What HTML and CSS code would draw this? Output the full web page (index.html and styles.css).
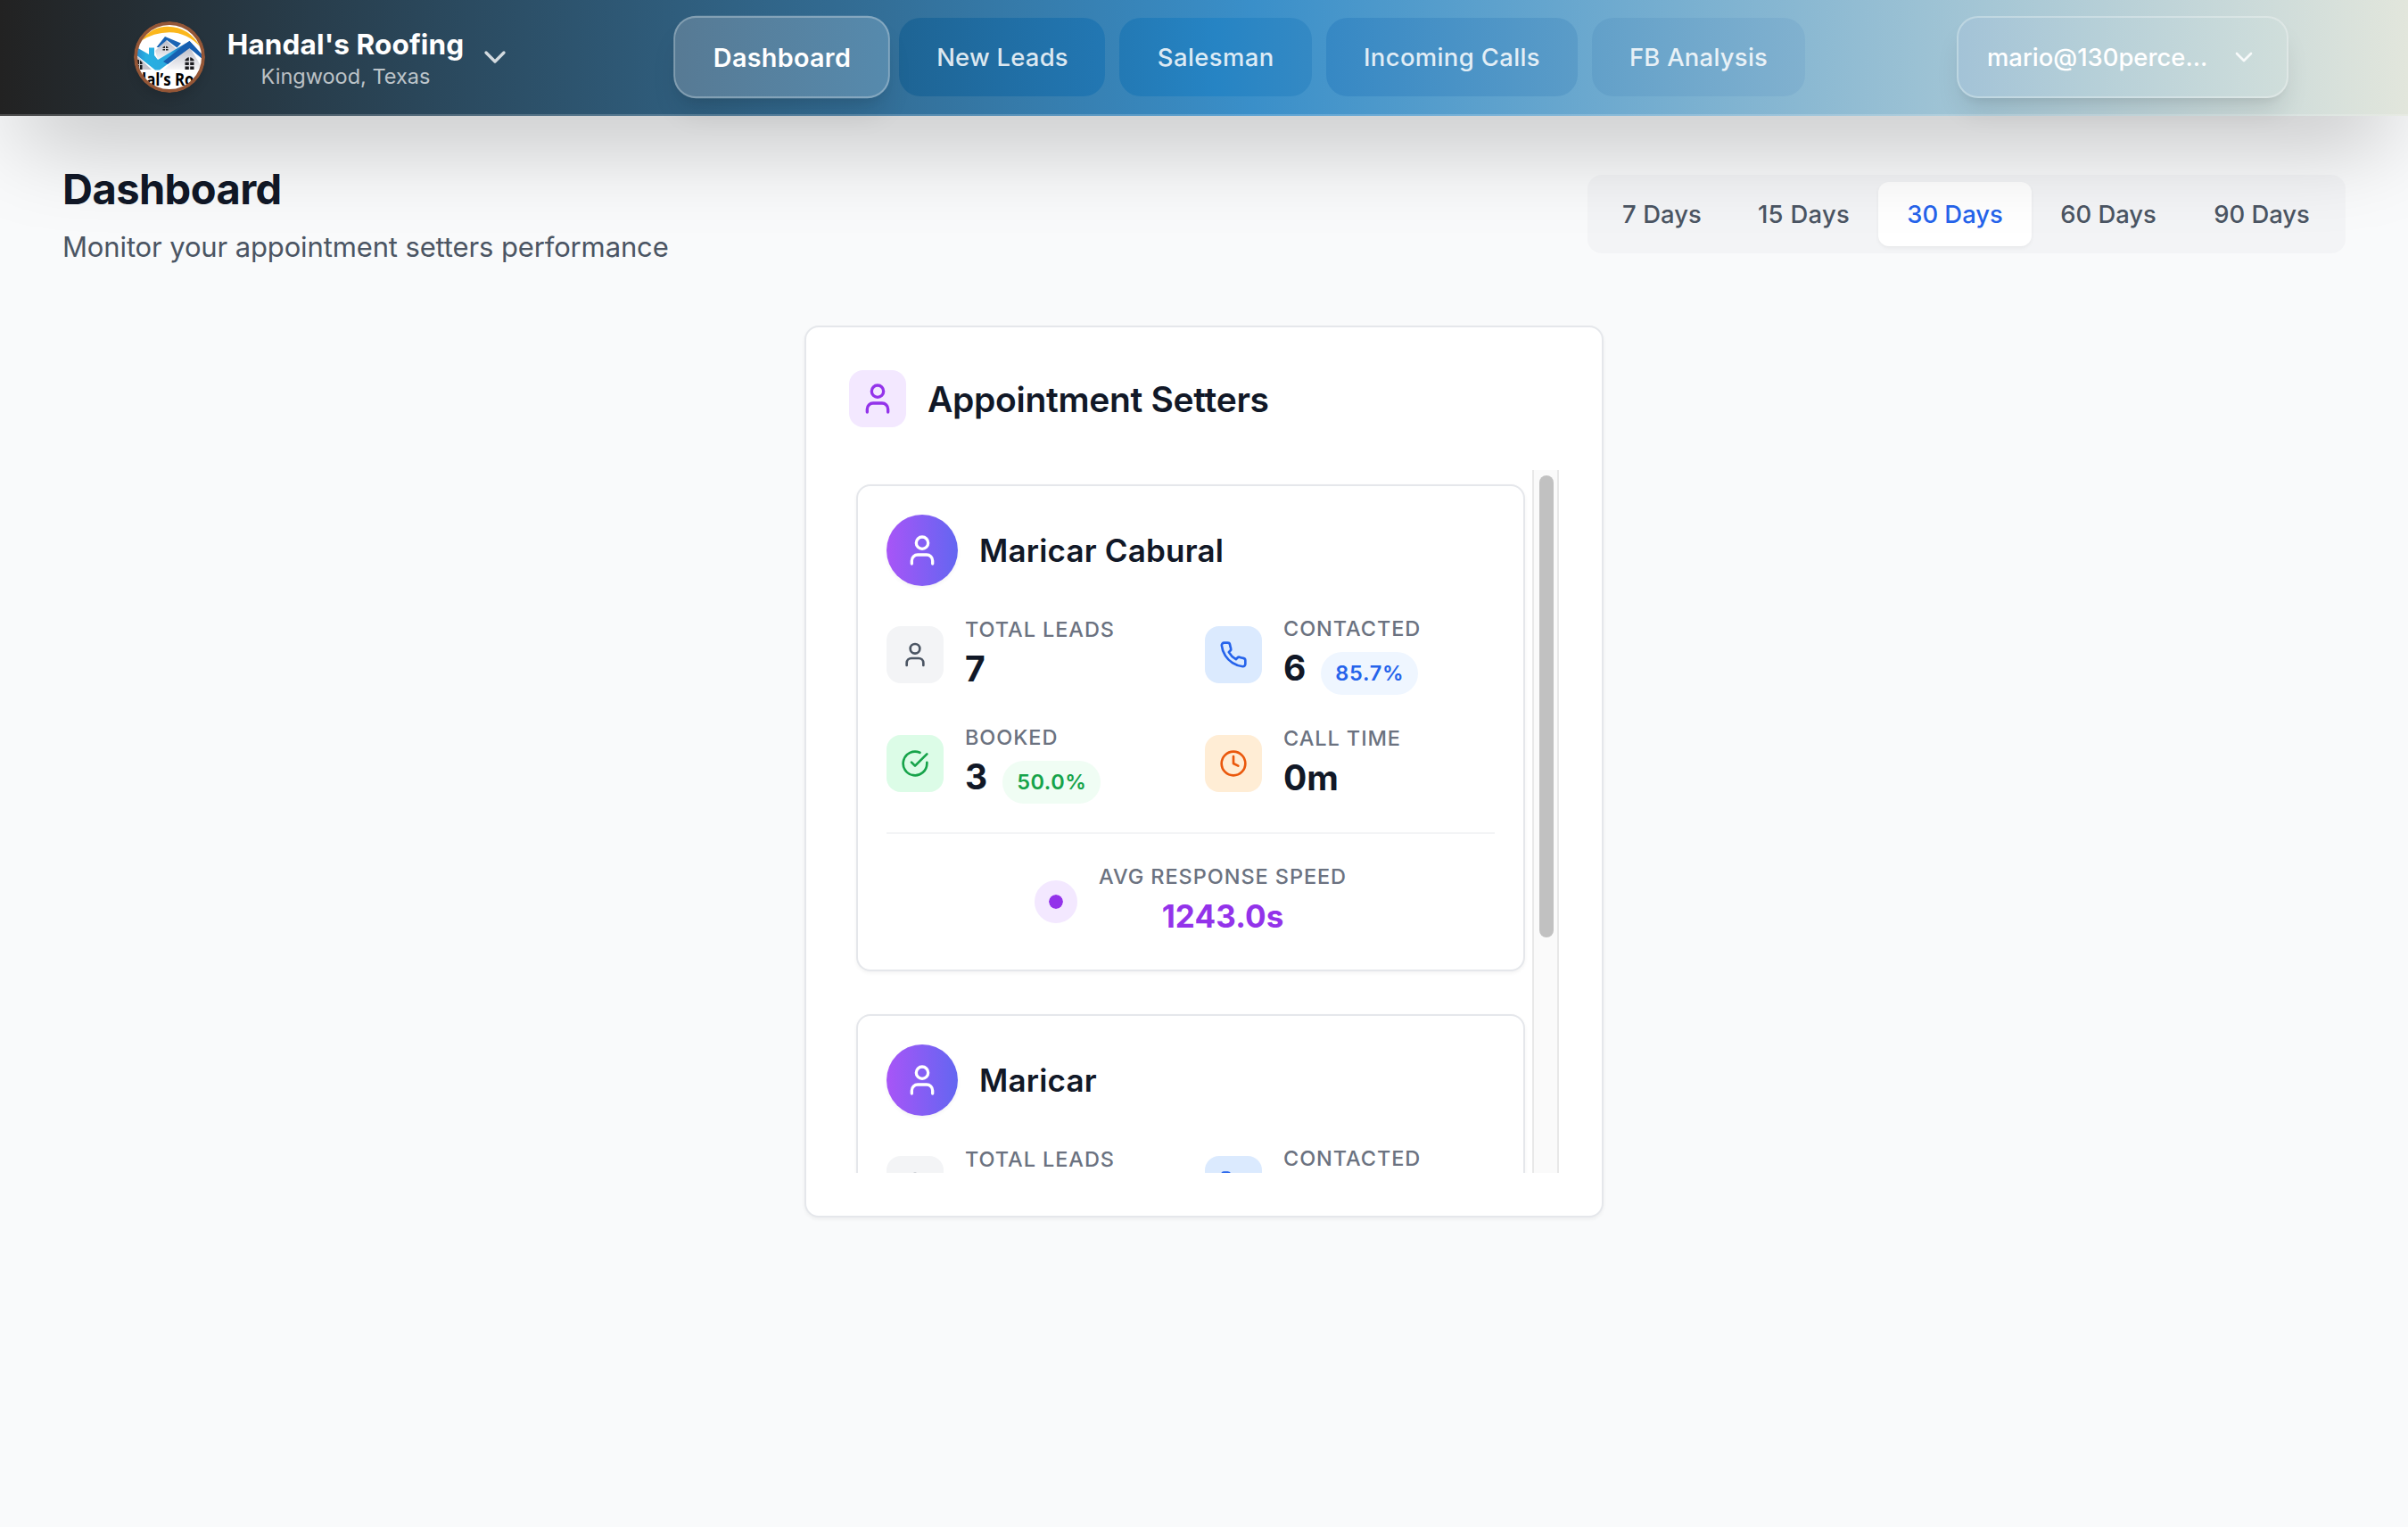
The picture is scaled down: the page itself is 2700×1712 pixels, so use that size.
FILE: index.html
```html
<!DOCTYPE html>
<html lang="en">
<head>
<meta charset="utf-8">
<title>Dashboard</title>
<link rel="stylesheet" href="styles.css">
</head>
<body>
<svg class="sprite" aria-hidden="true">
  <symbol id="user" viewBox="0 0 24 24"><path d="M19 21v-2a4 4 0 0 0-4-4H9a4 4 0 0 0-4 4v2"/><circle cx="12" cy="7" r="4"/></symbol>
  <symbol id="phone" viewBox="0 0 24 24"><path d="M22 16.92v3a2 2 0 0 1-2.18 2 19.79 19.79 0 0 1-8.63-3.07 19.5 19.5 0 0 1-6-6 19.79 19.79 0 0 1-3.07-8.67A2 2 0 0 1 4.11 2h3a2 2 0 0 1 2 1.72 12.84 12.84 0 0 0 .7 2.81 2 2 0 0 1-.45 2.11L8.09 9.91a16 16 0 0 0 6 6l1.27-1.27a2 2 0 0 1 2.11-.45 12.84 12.84 0 0 0 2.81.7A2 2 0 0 1 22 16.92z"/></symbol>
  <symbol id="check" viewBox="0 0 24 24"><path d="M22 11.08V12a10 10 0 1 1-5.93-9.14"/><path d="m9 11 3 3L22 4"/></symbol>
  <symbol id="clock" viewBox="0 0 24 24"><circle cx="12" cy="12" r="10"/><path d="M12 6v6l4 2"/></symbol>
  <symbol id="chevron" viewBox="0 0 24 24"><path d="m6 9 6 6 6-6"/></symbol>
</svg>

<header class="topbar">
  <div class="brand">
    <svg class="logo" viewBox="0 0 80 80">
      <defs>
        <clipPath id="disc"><circle cx="40" cy="40" r="36.5"/></clipPath>
        <linearGradient id="swoosh" x1="0" y1="0" x2="1" y2="0"><stop offset="0" stop-color="#2a86cc"/><stop offset=".15" stop-color="#27b0e2"/><stop offset=".5" stop-color="#2ba8de"/><stop offset=".72" stop-color="#1762b3"/><stop offset="1" stop-color="#1a5fae"/></linearGradient>
        <linearGradient id="wall" x1="0" y1="0" x2="0" y2="1"><stop offset="0" stop-color="#b9bac6"/><stop offset="1" stop-color="#f6f6f8"/></linearGradient>
      </defs>
      <circle cx="40" cy="40" r="38" fill="#fff"/>
      <g clip-path="url(#disc)">
        <path d="M8 22Q20 5.700 38 5.700Q62 6 75 29Q60 12.500 40 12.300Q22 12.500 8 22Z" fill="#fbb71c"/>
        <path d="M3 38l17 16H3z" fill="#c4c5cd"/>
        <path d="M36 21l12 10-21 12-3-10z" fill="url(#wall)"/>
        <path d="M25.500 29L35 17l18 7.500-4.500 5L37 21l-9 8z" fill="#1b64b4"/>
        <path d="M62 28l16 26H34z" fill="url(#wall)"/>
        <path d="M2 28.500L17 37v-7.500h6V38l4 5L62.500 22 79 40l-2 2-14.500-12.500L29 54.500h-5L2 37z" fill="url(#swoosh)"/>
        <path d="M62.500 22L79 40l-2 2-14.500-12L38 48l-5-3z" fill="#175fb0"/>
        <path d="M32.500 32.500v-3.500q3-3 6 0v3.500z" fill="#222"/><path d="M35.500 27v6M32 30.500h7" stroke="#dcdce2"/>
        <path d="M57.500 54V43q5-6 10 0v11z" fill="#1b1b1f"/><path d="M62.500 39v15M57 45h11M57 49.700h11" stroke="#dedee3" stroke-width="1.400"/>
        <path d="M3 54V43q3.500-1 6.500 3v8z" fill="#1b1b1f"/><path d="M3 48.500h7M6.500 43v11" stroke="#ccc"/>
        <text class="logo-text" x="3.500" y="72.300" textLength="64" lengthAdjust="spacingAndGlyphs">dal’s Ro</text>
      </g>
      <circle cx="40" cy="40" r="38" fill="none" stroke="#945636" stroke-width="4"/>
    </svg>
    <div class="brand-copy">
      <div class="brand-name">Handal's Roofing</div>
      <div class="brand-place">Kingwood, Texas</div>
    </div>
    <svg class="icon icon-lg brand-chevron"><use href="#chevron"/></svg>
  </div>
  <nav class="nav">
    <a class="nav-item nav-active">Dashboard</a>
    <a class="nav-item nav-leads">New Leads</a>
    <a class="nav-item nav-sales">Salesman</a>
    <a class="nav-item nav-calls">Incoming Calls</a>
    <a class="nav-item nav-fb">FB Analysis</a>
  </nav>
  <button class="account"><span>mario@130perce...</span><svg class="icon"><use href="#chevron"/></svg></button>
</header>

<main class="page">
  <div class="page-head">
    <div>
      <h1 class="page-title">Dashboard</h1>
      <p class="page-sub">Monitor your appointment setters performance</p>
    </div>
    <div class="range">
      <button class="range-item range-first">7 Days</button>
      <button class="range-item range-second">15 Days</button>
      <button class="range-item range-on">30 Days</button>
      <button class="range-item">60 Days</button>
      <button class="range-item">90 Days</button>
    </div>
  </div>

  <section class="panel">
    <div class="panel-head">
      <span class="tile purple"><svg class="icon icon-lg"><use href="#user"/></svg></span>
      <h2 class="panel-title">Appointment Setters</h2>
    </div>
    <div class="scroller">
      <div class="list">
        <article class="setter">
          <div class="setter-head">
            <span class="avatar"><svg class="icon icon-lg"><use href="#user"/></svg></span>
            <h3 class="setter-name">Maricar Cabural</h3>
          </div>
          <div class="stats">
            <div class="stat"><span class="tile gray"><svg class="icon"><use href="#user"/></svg></span><div><div class="label">Total Leads</div><div class="value">7</div></div></div>
            <div class="stat"><span class="tile blue"><svg class="icon"><use href="#phone"/></svg></span><div><div class="label">Contacted</div><div class="value with-pill">6<span class="pill pill-blue">85.7%</span></div></div></div>
            <div class="stat"><span class="tile green"><svg class="icon"><use href="#check"/></svg></span><div><div class="label">Booked</div><div class="value with-pill">3<span class="pill pill-green">50.0%</span></div></div></div>
            <div class="stat"><span class="tile orange"><svg class="icon"><use href="#clock"/></svg></span><div><div class="label">Call Time</div><div class="value">0m</div></div></div>
          </div>
          <div class="speed">
            <span class="dot"></span>
            <div><div class="label">Avg Response Speed</div><div class="speed-value">1243.0s</div></div>
          </div>
        </article>
        <article class="setter">
          <div class="setter-head">
            <span class="avatar"><svg class="icon icon-lg"><use href="#user"/></svg></span>
            <h3 class="setter-name">Maricar</h3>
          </div>
          <div class="stats">
            <div class="stat"><span class="tile gray"><svg class="icon"><use href="#user"/></svg></span><div><div class="label">Total Leads</div><div class="value"></div></div></div>
            <div class="stat"><span class="tile blue"><svg class="icon"><use href="#phone"/></svg></span><div><div class="label">Contacted</div><div class="value with-pill"></div></div></div>
          </div>
        </article>
      </div>
      <div class="track"><div class="thumb"></div></div>
    </div>
  </section>
</main>
</body>
</html>
```
FILE: styles.css
```css
* { box-sizing: border-box; margin: 0; }
body { background: #f9fafb; font-family: Inter, "Noto Sans", sans-serif; color: #111827; height: 1712px; overflow: hidden; }
button { border: 0; background: none; font: inherit; padding: 0; }
.sprite { display: none; }
.icon { width: 32px; height: 32px; fill: none; stroke: currentColor; stroke-width: 2; stroke-linecap: round; stroke-linejoin: round; flex: none; }
.icon-lg { width: 40px; height: 40px; }

/* Top bar */
.topbar { position: relative; z-index: 2; display: flex; align-items: center; height: 130px; padding: 0 134px 0 150px; border-bottom: 2px solid rgba(255,255,255,.2); background: linear-gradient(90deg, #222222 0%, #3a8fc9 52%, #e2e6dc 100%) border-box; box-shadow: 0 50px 100px -24px rgba(0,0,0,.25); }
.brand { display: flex; align-items: center; width: 425px; }
.logo { width: 80px; height: 80px; border-radius: 50%; margin-right: 24px; box-shadow: 0 8px 12px -2px rgba(0,0,0,.12); }
.logo-text { font: 700 19px "Open Sans", sans-serif; }
.brand-copy { width: 267px; text-align: center; }
.brand-name { font-size: 31.5px; font-weight: 700; line-height: 43px; letter-spacing: .13px; color: #fff; white-space: nowrap; }
.brand-place { font-size: 23.5px; line-height: 30px; letter-spacing: 0; color: rgba(255,255,255,.7); }
.brand-chevron { margin-left: 14px; color: rgba(255,255,255,.8); }
.nav { display: flex; gap: 16px; margin-left: 186px; }
.nav-item { display: flex; align-items: center; justify-content: center; height: 88px; padding-left: 1px; border-radius: 24px; font-size: 27.4px; font-weight: 500; color: rgba(255,255,255,.85); }
.nav-active { width: 231px; transform: scale(1.05); border: 2px solid rgba(255,255,255,.4); background: linear-gradient(90deg, #577a94, #568aad) padding-box; color: #fff; font-weight: 600; letter-spacing: .28px; box-shadow: 0 20px 30px -6px rgba(0,0,0,.1), 0 8px 12px -8px rgba(0,0,0,.1); }
.nav-leads { width: 231px; background: linear-gradient(90deg, #1e6494, #2277b3); letter-spacing: .25px; }
.nav-sales { width: 215.500px; background: linear-gradient(90deg, #2379b4, #2684c4 50%, #3489c4); letter-spacing: .45px; }
.nav-calls { width: 282px; background: linear-gradient(90deg, #3688c4, #5b9cc8); letter-spacing: .4px; }
.nav-fb { width: 239px; background: linear-gradient(90deg, #62a0c9, #81b1cf); letter-spacing: .28px; }
.account { display: flex; align-items: center; justify-content: space-between; width: 372px; height: 92px; margin-left: auto; padding: 0 32px; border: 2px solid rgba(255,255,255,.3); border-radius: 24px; background: linear-gradient(90deg, #a3c3d7, #b5cfd8 40%, #d0dedb) padding-box; color: #fff; font-size: 27.4px; font-weight: 500; box-shadow: 0 20px 30px -6px rgba(0,0,0,.1), 0 8px 12px -8px rgba(0,0,0,.1); }
.account .icon { color: rgba(255,255,255,.85); }

/* Page heading */
.page { padding: 51px 70px 0; }
.page-head { display: flex; justify-content: space-between; align-items: center; height: 118px; }
.page-title { font-size: 47px; font-weight: 700; line-height: 58px; letter-spacing: -.55px; }
.page-sub { margin-top: 16px; font-size: 31px; line-height: 40px; letter-spacing: -.13px; color: #4b5563; }
.range { display: flex; padding: 8px; border-radius: 16px; background: #f3f4f6; }
.range-item { width: 172px; height: 72px; border-radius: 12px; color: #4b5563; font-size: 27.4px; font-weight: 500; }
.range-first { width: 151px; letter-spacing: .1px; }
.range-second { width: 167px; letter-spacing: .3px; }
.range-on { background: #fff; color: #2563eb; box-shadow: 0 2px 4px rgba(0,0,0,.05); }

/* Panel */
.panel { width: 896px; margin: 66px auto 0; padding: 48px; border: 2px solid #e5e7eb; border-radius: 16px; background: #fff; box-shadow: 0 2px 4px rgba(0,0,0,.05); }
.panel-head { display: flex; align-items: center; gap: 24px; margin-bottom: 48px; }
.panel-title { font-size: 39px; font-weight: 600; letter-spacing: -.31px; }
.tile { display: flex; align-items: center; justify-content: center; width: 64px; height: 64px; border-radius: 16px; flex: none; }
.purple { background: #f3e8ff; color: #9333ea; }
.gray { background: #f3f4f6; color: #4b5563; }
.blue { background: #dbeafe; color: #2563eb; }
.green { background: #dcfce7; color: #16a34a; }
.orange { background: #ffedd5; color: #ea580c; }
.scroller { display: flex; height: 788px; overflow: hidden; }
.list { flex: 1; display: flex; flex-direction: column; gap: 48px; padding: 16px 8px; }
.track { width: 30px; padding: 6px 4px 0 6px; border: solid #e8e8e8; border-width: 0 2px; background: #fafafa; }
.thumb { width: 16px; height: 518px; border-radius: 8px; background: #c1c1c1; }

/* Setter card */
.setter { flex: none; height: 546px; padding: 32px; border: 2px solid #e5e7eb; border-radius: 16px; background: #fff; box-shadow: 0 2px 4px rgba(0,0,0,.05); }
.setter-head { display: flex; align-items: center; gap: 24px; margin-bottom: 32px; }
.avatar { display: flex; align-items: center; justify-content: center; width: 80px; height: 80px; border-radius: 50%; background: linear-gradient(90deg, #a855f7, #6366f1); color: #fff; box-shadow: 0 2px 4px rgba(0,0,0,.05); }
.setter-name { font-size: 35px; font-weight: 600; letter-spacing: .18px; }
.stats { display: grid; grid-template-columns: 1fr 1fr; grid-auto-rows: 90px; gap: 32px; }
.stat { display: flex; align-items: center; gap: 24px; }
.label { font-size: 23.5px; font-weight: 500; line-height: 32px; letter-spacing: .93px; text-transform: uppercase; color: #6b7280; white-space: nowrap; }
.value { height: 56px; font-size: 39px; font-weight: 700; line-height: 56px; }
.with-pill { display: flex; gap: 16.5px; height: 58px; }
.pill { align-self: flex-end; height: 48px; padding: 0 15.5px 0 16.5px; border-radius: 24px; font-size: 23.5px; font-weight: 600; line-height: 48px; letter-spacing: .5px; }
.pill-blue { background: #eff6ff; color: #2563eb; letter-spacing: .7px; }
.pill-green { background: #f0fdf4; color: #16a34a; }
.speed { display: flex; align-items: center; justify-content: center; gap: 24px; margin-top: 32px; padding-top: 32px; border-top: 2px solid #f3f4f6; }
.dot { width: 48px; height: 48px; border: 16px solid #f3e8ff; border-radius: 50%; background: #9333ea; background-clip: padding-box; }
.speed-value { font-size: 35px; font-weight: 700; line-height: 56px; letter-spacing: .1px; text-align: center; color: #9333ea; }
```
